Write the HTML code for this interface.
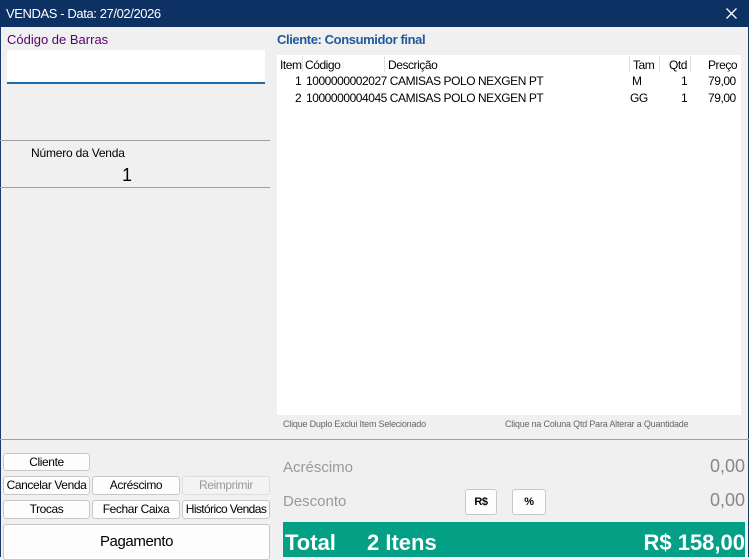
<!DOCTYPE html><html><head><style>
*{margin:0;padding:0;box-sizing:border-box}
body{width:749px;height:557px;background:#f0f0f0;font-family:"Liberation Sans",sans-serif;position:relative;overflow:hidden}
.a{position:absolute;white-space:nowrap}
.btn{position:absolute;background:#fdfdfd;border:1px solid #c8c8c8;border-radius:3px;font-size:12px;text-align:center;color:#000;letter-spacing:-.4px}
.g{font-size:12px;color:#000;letter-spacing:-.45px}
</style></head><body>
<div class="a" style="left:0;top:0;width:1px;height:557px;background:#1a3a6a"></div>
<div class="a" style="right:0;top:0;width:1px;height:557px;background:#1a3a6a"></div>
<div class="a" style="left:0;top:0;width:749px;height:27px;background:#0e3164"></div>
<div class="a" style="left:6px;top:6px;color:#fff;font-size:13px;letter-spacing:-.4px">VENDAS - Data: 27/02/2026</div>
<svg class="a" style="left:726px;top:8px" width="11" height="11"><path d="M0.5 0.5L10.5 10.5M10.5 0.5L0.5 10.5" stroke="#fff" stroke-width="1.3"/></svg>
<div class="a" style="left:7px;top:32px;color:#5a0070;font-size:13px">Código de Barras</div>
<div class="a" style="left:7px;top:50px;width:258px;height:34px;background:#fff;border-bottom:2px solid #1a6ab0"></div>
<div class="a" style="left:0;top:140px;width:270px;border-top:1px solid #a0a0a0"></div>
<div class="a" style="left:31px;top:146px;font-size:12px;letter-spacing:-.2px">Número da Venda</div>
<div class="a" style="left:122px;top:165px;font-size:18px">1</div>
<div class="a" style="left:0;top:187px;width:270px;border-top:1px solid #a0a0a0"></div>
<div class="a" style="left:277px;top:32px;color:#1f5a9a;font-size:13px;font-weight:bold;letter-spacing:-.4px">Cliente: Consumidor final</div>
<div class="a" style="left:277px;top:55px;width:464px;height:360px;background:#fff"></div>
<div class="a g" style="left:280px;top:58px">Item</div>
<div class="a g" style="left:305px;top:58px">Código</div>
<div class="a g" style="left:388px;top:58px">Descrição</div>
<div class="a g" style="left:633px;top:58px">Tam</div>
<div class="a g" style="left:669px;top:58px">Qtd</div>
<div class="a g" style="left:708px;top:58px">Preço</div>
<div class="a" style="left:629px;top:56px;height:16px;border-left:1px solid #e0e0e0"></div>
<div class="a" style="left:659px;top:56px;height:16px;border-left:1px solid #e0e0e0"></div>
<div class="a" style="left:690px;top:56px;height:16px;border-left:1px solid #e0e0e0"></div>
<div class="a" style="left:384px;top:56px;height:16px;border-left:1px solid #e0e0e0"></div>
<div class="a" style="left:302px;top:56px;height:16px;border-left:1px solid #e0e0e0"></div>
<div class="a g" style="left:295px;top:74px">1</div><div class="a g" style="left:306px;top:74px">1000000002027 CAMISAS POLO NEXGEN PT</div><div class="a g" style="left:632px;top:74px">M</div><div class="a g" style="left:681px;top:74px">1</div><div class="a g" style="left:708px;top:74px">79,00</div>
<div class="a g" style="left:295px;top:91px">2</div><div class="a g" style="left:306px;top:91px">1000000004045 CAMISAS POLO NEXGEN PT</div><div class="a g" style="left:630px;top:91px">GG</div><div class="a g" style="left:681px;top:91px">1</div><div class="a g" style="left:708px;top:91px">79,00</div>
<div class="a" style="left:283px;top:419px;font-size:9px;color:#666;letter-spacing:-.2px">Clique Duplo Exclui Item Selecionado</div>
<div class="a" style="left:505px;top:419px;font-size:9px;color:#666;letter-spacing:-.2px">Clique na Coluna Qtd Para Alterar a Quantidade</div>
<div class="a" style="left:0;top:439px;width:749px;border-top:1px solid #a0a0a0"></div>
<div class="btn" style="left:3px;top:453px;width:87px;height:18px;line-height:16px">Cliente</div>
<div class="btn" style="left:3px;top:476px;width:87px;height:19px;line-height:17px">Cancelar Venda</div>
<div class="btn" style="left:92px;top:476px;width:88px;height:19px;line-height:17px">Acréscimo</div>
<div class="btn" style="left:182px;top:476px;width:88px;height:19px;line-height:17px;color:#999;background:#f4f4f4;border-color:#ddd">Reimprimir</div>
<div class="btn" style="left:3px;top:500px;width:87px;height:19px;line-height:17px">Trocas</div>
<div class="btn" style="left:92px;top:500px;width:88px;height:19px;line-height:17px">Fechar Caixa</div>
<div class="btn" style="left:182px;top:500px;width:88px;height:19px;line-height:17px;letter-spacing:-.6px">Histórico Vendas</div>
<div class="btn" style="left:3px;top:524px;width:267px;height:36px;line-height:33px;font-size:15px">Pagamento</div>
<div class="a" style="left:283px;top:459px;font-size:15px;color:#999">Acréscimo</div>
<div class="a" style="left:283px;top:493px;font-size:15px;color:#999">Desconto</div>
<div class="a" style="right:4px;top:456px;font-size:18px;color:#888">0,00</div>
<div class="a" style="right:4px;top:490px;font-size:18px;color:#888">0,00</div>
<div class="btn" style="left:465px;top:489px;width:32px;height:26px;line-height:24px;font-size:11px;font-weight:bold">R$</div>
<div class="btn" style="left:512px;top:489px;width:34px;height:26px;line-height:24px;font-size:11px;font-weight:bold">%</div>
<div class="a" style="left:283px;top:522px;width:462px;height:35px;background:#04a085"></div>
<div class="a" style="left:285px;top:530px;font-size:22px;font-weight:bold;color:#fff">Total</div>
<div class="a" style="left:367px;top:530px;font-size:22px;font-weight:bold;color:#fff">2 Itens</div>
<div class="a" style="right:4px;top:530px;font-size:22px;font-weight:bold;color:#fff">R$ 158,00</div>
</body></html>
